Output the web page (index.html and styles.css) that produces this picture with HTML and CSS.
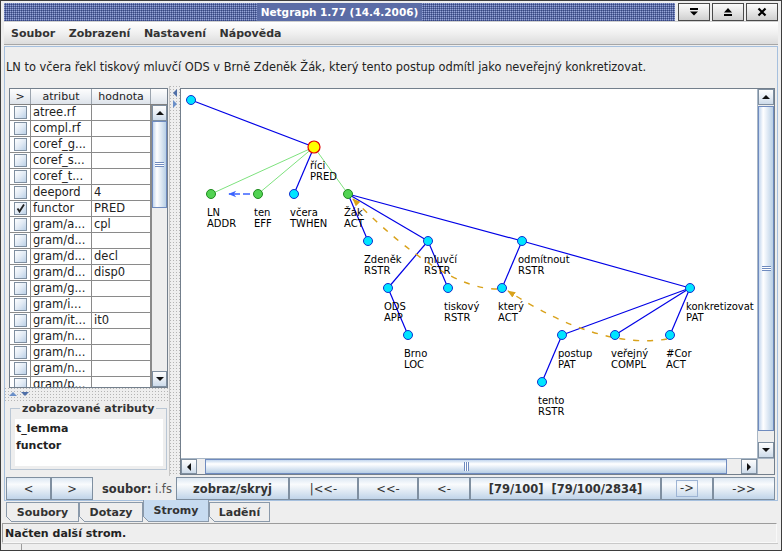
FILE: index.html
```html
<!DOCTYPE html>
<html lang="cs">
<head>
<meta charset="utf-8">
<title>Netgraph 1.77</title>
<link rel="stylesheet" href="styles.css">
</head>
<body>
<div class="window">
  <div class="titlebar">
    <div class="bumps"></div>
    <div class="title">Netgraph 1.77 (14.4.2006)</div>
    <div class="bumps"></div>
    <div class="wbtns">
      <div class="wbtn"><svg width="12" height="10" viewBox="0 0 12 10"><rect x="2" y="1" width="8" height="2"/><path d="M2 4.5h8l-4 4z"/></svg></div>
      <div class="wbtn"><svg width="12" height="10" viewBox="0 0 12 10"><path d="M2 5.5h8l-4-4.5z"/><rect x="2" y="7" width="8" height="2"/></svg></div>
      <div class="wbtn"><svg width="12" height="10" viewBox="0 0 12 10"><path d="M2.5 1.5l7 7M9.5 1.5l-7 7" stroke="#000" stroke-width="2.2" fill="none"/></svg></div>
    </div>
  </div>
  <div class="menubar">
    <span class="menu">Soubor</span>
    <span class="menu">Zobrazení</span>
    <span class="menu">Nastavení</span>
    <span class="menu">Nápověda</span>
  </div>
  <div class="main">
    <div class="sentence">LN to včera řekl tiskový mluvčí ODS v Brně Zdeněk Žák, který tento postup odmítl jako neveřejný konkretizovat.</div>
    <div class="split">
      <div class="leftpane">
        <div class="attr-table">
          <div class="thead">
            <div class="th c-sel">&gt;</div>
            <div class="th c-name">atribut</div>
            <div class="th c-val">hodnota</div>
            <div class="th c-corner"></div>
          </div>
          <div class="tbody">
            <div class="rows">
              <div class="row"><div class="cell c-sel"><span class="chk"></span></div><div class="cell c-name">atree.rf</div><div class="cell c-val"></div></div>
              <div class="row"><div class="cell c-sel"><span class="chk"></span></div><div class="cell c-name">compl.rf</div><div class="cell c-val"></div></div>
              <div class="row"><div class="cell c-sel"><span class="chk"></span></div><div class="cell c-name">coref_g...</div><div class="cell c-val"></div></div>
              <div class="row"><div class="cell c-sel"><span class="chk"></span></div><div class="cell c-name">coref_s...</div><div class="cell c-val"></div></div>
              <div class="row"><div class="cell c-sel"><span class="chk"></span></div><div class="cell c-name">coref_t...</div><div class="cell c-val"></div></div>
              <div class="row"><div class="cell c-sel"><span class="chk"></span></div><div class="cell c-name">deepord</div><div class="cell c-val">4</div></div>
              <div class="row"><div class="cell c-sel"><span class="chk"><svg width="11" height="11" viewBox="0 0 11 11"><path d="M2.5 5.5l2 3 4.5-7" fill="none" stroke="#222" stroke-width="1.8"/></svg></span></div><div class="cell c-name">functor</div><div class="cell c-val">PRED</div></div>
              <div class="row"><div class="cell c-sel"><span class="chk"></span></div><div class="cell c-name">gram/a...</div><div class="cell c-val">cpl</div></div>
              <div class="row"><div class="cell c-sel"><span class="chk"></span></div><div class="cell c-name">gram/d...</div><div class="cell c-val"></div></div>
              <div class="row"><div class="cell c-sel"><span class="chk"></span></div><div class="cell c-name">gram/d...</div><div class="cell c-val">decl</div></div>
              <div class="row"><div class="cell c-sel"><span class="chk"></span></div><div class="cell c-name">gram/d...</div><div class="cell c-val">disp0</div></div>
              <div class="row"><div class="cell c-sel"><span class="chk"></span></div><div class="cell c-name">gram/g...</div><div class="cell c-val"></div></div>
              <div class="row"><div class="cell c-sel"><span class="chk"></span></div><div class="cell c-name">gram/i...</div><div class="cell c-val"></div></div>
              <div class="row"><div class="cell c-sel"><span class="chk"></span></div><div class="cell c-name">gram/it...</div><div class="cell c-val">it0</div></div>
              <div class="row"><div class="cell c-sel"><span class="chk"></span></div><div class="cell c-name">gram/n...</div><div class="cell c-val"></div></div>
              <div class="row"><div class="cell c-sel"><span class="chk"></span></div><div class="cell c-name">gram/n...</div><div class="cell c-val"></div></div>
              <div class="row"><div class="cell c-sel"><span class="chk"></span></div><div class="cell c-name">gram/n...</div><div class="cell c-val"></div></div>
              <div class="row"><div class="cell c-sel"><span class="chk"></span></div><div class="cell c-name">gram/p...</div><div class="cell c-val"></div></div>
            </div>
            <div class="vscroll small">
              <div class="sbtn"><span class="tri-u"></span></div>
              <div class="track"><div class="thumb tthumb"><span class="grip-v"></span></div></div>
              <div class="sbtn"><span class="tri-d"></span></div>
            </div>
          </div>
        </div>
        <div class="hsplit"><span class="mini-u"></span><span class="mini-d"></span></div>
        <fieldset class="shown">
          <legend>zobrazované atributy</legend>
          <div class="shown-list">
            <div class="shown-item">t_lemma</div>
            <div class="shown-item">functor</div>
          </div>
        </fieldset>
      </div>
      <div class="vsplit"><span class="mini-l"></span><span class="mini-r"></span></div>
      <div class="treepane">
        <div class="viewport">
          <svg class="tree" width="576" height="369" viewBox="181 89 576 369">
            <defs>
              <marker id="oa" viewBox="0 0 10 10" refX="9" refY="5" markerWidth="8" markerHeight="8" orient="auto" markerUnits="userSpaceOnUse">
                <path d="M0 1L10 5L0 9z" fill="#d9a21b"/>
              </marker>
              <marker id="ba" viewBox="0 0 10 10" refX="9" refY="5" markerWidth="9" markerHeight="8" orient="auto" markerUnits="userSpaceOnUse">
                <path d="M0 1L10 5L0 9L3 5z" fill="#3b63ff"/>
              </marker>
            </defs>
            <g fill="none" stroke="#7ee27e" stroke-width="1">
              <line x1="314" y1="147" x2="211" y2="194"/>
              <line x1="314" y1="147" x2="258" y2="194"/>
              <line x1="314" y1="147" x2="348" y2="194"/>
            </g>
            <g fill="none" stroke="#0000e6" stroke-width="1.2">
              <line x1="191" y1="100" x2="314" y2="147"/>
              <line x1="314" y1="147" x2="294" y2="194"/>
              <line x1="348" y1="194" x2="368" y2="241"/>
              <line x1="348" y1="194" x2="428" y2="241"/>
              <line x1="348" y1="194" x2="522" y2="241"/>
              <line x1="522" y1="241" x2="690" y2="288"/>
              <line x1="428" y1="241" x2="388" y2="288"/>
              <line x1="428" y1="241" x2="448" y2="288"/>
              <line x1="388" y1="288" x2="408" y2="335"/>
              <line x1="522" y1="241" x2="502" y2="288"/>
              <line x1="690" y1="288" x2="562" y2="335"/>
              <line x1="690" y1="288" x2="615" y2="335"/>
              <line x1="690" y1="288" x2="670" y2="335"/>
              <line x1="562" y1="335" x2="542" y2="382"/>
            </g>
            <g fill="none" stroke="#d9a21b" stroke-width="1.4" stroke-dasharray="6 8">
              <path d="M667 339 Q600 350 508 291" marker-end="url(#oa)"/>
              <path d="M497 289 Q443 289 353 199" marker-end="url(#oa)"/>
            </g>
            <line x1="250" y1="194" x2="229" y2="194" stroke="#3b63ff" stroke-width="1.6" stroke-dasharray="7 3" marker-end="url(#ba)"/>
            <g class="n-cyan">
              <circle cx="191" cy="100" r="4.5"/>
              <circle cx="294" cy="194" r="4.5"/>
              <circle cx="368" cy="241" r="4.5"/>
              <circle cx="428" cy="241" r="4.5"/>
              <circle cx="522" cy="241" r="4.5"/>
              <circle cx="388" cy="288" r="4.5"/>
              <circle cx="448" cy="288" r="4.5"/>
              <circle cx="502" cy="288" r="4.5"/>
              <circle cx="690" cy="288" r="4.5"/>
              <circle cx="408" cy="335" r="4.5"/>
              <circle cx="562" cy="335" r="4.5"/>
              <circle cx="615" cy="335" r="4.5"/>
              <circle cx="670" cy="335" r="4.5"/>
              <circle cx="542" cy="382" r="4.5"/>
            </g>
            <g class="n-green">
              <circle cx="211" cy="194" r="4.5"/>
              <circle cx="258" cy="194" r="4.5"/>
              <circle cx="348" cy="194" r="4.5"/>
            </g>
            <circle class="n-yellow" cx="314" cy="147" r="6"/>
            <g class="lbl">
              <text x="310" y="169">říci<tspan x="310" y="180">PRED</tspan></text>
              <text x="207" y="216">LN<tspan x="207" y="227">ADDR</tspan></text>
              <text x="254" y="216">ten<tspan x="254" y="227">EFF</tspan></text>
              <text x="290" y="216">včera<tspan x="290" y="227">TWHEN</tspan></text>
              <text x="344" y="216">Žák<tspan x="344" y="227">ACT</tspan></text>
              <text x="364" y="263">Zdeněk<tspan x="364" y="274">RSTR</tspan></text>
              <text x="424" y="263">mluvčí<tspan x="424" y="274">RSTR</tspan></text>
              <text x="518" y="263">odmítnout<tspan x="518" y="274">RSTR</tspan></text>
              <text x="384" y="310">ODS<tspan x="384" y="321">APP</tspan></text>
              <text x="444" y="310">tiskový<tspan x="444" y="321">RSTR</tspan></text>
              <text x="498" y="310">který<tspan x="498" y="321">ACT</tspan></text>
              <text x="686" y="310">konkretizovat<tspan x="686" y="321">PAT</tspan></text>
              <text x="404" y="357">Brno<tspan x="404" y="368">LOC</tspan></text>
              <text x="558" y="357">postup<tspan x="558" y="368">PAT</tspan></text>
              <text x="611" y="357">veřejný<tspan x="611" y="368">COMPL</tspan></text>
              <text x="666" y="357">#Cor<tspan x="666" y="368">ACT</tspan></text>
              <text x="538" y="404">tento<tspan x="538" y="415">RSTR</tspan></text>
            </g>
          </svg>
        </div>
        <div class="vscroll">
          <div class="sbtn"><span class="tri-u"></span></div>
          <div class="track"><div class="thumb vthumb"><span class="grip-v"></span></div></div>
          <div class="sbtn"><span class="tri-d"></span></div>
        </div>
        <div class="hscroll">
          <div class="sbtn"><span class="tri-l"></span></div>
          <div class="track"><div class="thumb hthumb"><span class="grip-h"></span></div></div>
          <div class="sbtn"><span class="tri-r"></span></div>
        </div>
        <div class="corner"></div>
      </div>
    </div>
    <div class="toolbar">
      <div class="btn w45">&lt;</div>
      <div class="btn w42">&gt;</div>
      <div class="file-label"><b>soubor:</b>&nbsp;<span class="fname">i.fs</span></div>
      <div class="btn bold w113">zobraz/skryj</div>
      <div class="btn w69">|&lt;&lt;-</div>
      <div class="btn w60">&lt;&lt;-</div>
      <div class="btn w52">&lt;-</div>
      <div class="btn bold w191">[79/100]&nbsp;&nbsp;[79/100/2834]</div>
      <div class="btn w52"><span class="focus">-&gt;</span></div>
      <div class="btn w62">-&gt;&gt;</div>
    </div>
  </div>
  <div class="tabs">
    <div class="tab t73">Soubory</div>
    <div class="tab t64">Dotazy</div>
    <div class="tab t66 sel">Stromy</div>
    <div class="tab t61">Ladění</div>
  </div>
  <div class="status">Načten další strom.</div>
  <div class="strip"><span class="strip-cell"></span></div>
</div>
</body>
</html>
```

FILE: styles.css
```css
* { box-sizing: border-box; }
html, body { margin: 0; padding: 0; }
body {
  width: 782px; height: 551px; overflow: hidden;
  background: #eeeeee;
  font-family: "DejaVu Sans", "Liberation Sans", sans-serif;
  font-size: 11px; color: #333333;
}
.window {
  width: 782px; height: 551px;
  border: 1px solid #3d3d3d;
  padding: 2px 3px 0 3px;
  display: flex; flex-direction: column;
  background: #eeeeee;
}

/* title bar */
.titlebar { height: 18px; flex: none; display: flex; align-items: stretch; }
.bumps {
  flex: 1;
  background-color: #5b6ca6;
  background-image:
    conic-gradient(at 1px 1px, transparent 0 75%, #97a5d6 0),
    conic-gradient(at 1px 1px, transparent 0 75%, #38477f 0);
  background-size: 2px 2px, 2px 2px;
  background-position: 0 0, 1px 1px;
}
.title {
  background: #5b6ca6; color: #ffffff;
  font-weight: bold; font-size: 10.5px; line-height: 18px;
  padding: 0 4px; white-space: nowrap;
}
.wbtns { display: flex; gap: 2px; margin-left: 3px; }
.wbtn {
  width: 32px; height: 18px;
  border: 1px solid #4a4a4a;
  background: linear-gradient(#fbfbfb, #e2e2e2 60%, #cfcfcf);
  display: flex; align-items: center; justify-content: center;
}
.wbtn svg { fill: #000; }

/* menu */
.menubar {
  height: 24px; flex: none;
  display: flex; align-items: center; gap: 13.5px;
  padding-left: 7px;
  background: linear-gradient(#ffffff, #f0f0f0 50%, #dcdcdc);
  border-top: 1px solid #cfcfcf;
  border-bottom: 1px solid #a6a6a6;
}
.menu { font-weight: bold; font-size: 11px; color: #333333; }

/* main tab content */
.main {
  margin-top: 1px; height: 455px; flex: none;
  border: 1px solid #a6c0de;
  display: flex; flex-direction: column;
}
.sentence {
  height: 39px; flex: none;
  display: flex; align-items: center;
  padding: 1px 0 0 1px; font-size: 11.4px; color: #222222; white-space: nowrap;
}
.split { height: 390px; flex: none; display: flex; }

/* left pane */
.leftpane {
  width: 165px; flex: none;
  padding: 2px 1px 0 4px;
  display: flex; flex-direction: column;
  border-right: 1px solid #c6c6c6;
}
.attr-table {
  height: 300px; flex: none;
  border: 1px solid #737f8c;
  display: flex; flex-direction: column;
  background: #ffffff;
}
.thead { height: 16px; flex: none; display: flex; border-bottom: 1px solid #808080; }
.th {
  background: linear-gradient(#fdfdfd, #eef1f5 50%, #dde3ea);
  border-right: 1px solid #9ba4ae;
  text-align: center; line-height: 15px; font-size: 11px; color: #222;
}
.th.c-corner { flex: 1; border-right: 0; }
.c-sel { width: 21px; flex: none; }
.c-name { width: 61px; flex: none; }
.c-val { width: 59px; flex: none; }
.tbody { flex: 1; display: flex; overflow: hidden; }
.rows { width: 141px; flex: none; overflow: hidden; }
.row { height: 16px; display: flex; border-bottom: 1px solid #8a8a8a; }
.cell {
  border-right: 1px solid #8a8a8a;
  line-height: 15px; font-size: 11.5px; color: #222;
  white-space: nowrap; overflow: hidden; padding-left: 2px;
}
.cell.c-sel { padding: 1px 0 0 4px; }
.chk {
  display: flex; align-items: center; justify-content: center;
  width: 13px; height: 13px;
  border: 1px solid #7f8fa0;
  background: linear-gradient(135deg, #ffffff, #e2ebf5 50%, #bcd1e7);
}

/* scrollbars */
.vscroll { display: flex; flex-direction: column; background: #eeeeee; border-left: 1px solid #a9b7c6; }
.vscroll.small { width: 16px; flex: none; border-left: 1px solid #8a8a8a; }
.hscroll { display: flex; background: #eeeeee; border-top: 1px solid #a9b7c6; }
.sbtn {
  flex: none; width: 16px; height: 16px;
  border: 1px solid #7f8fa0;
  background: linear-gradient(#fdfdfd, #e8eef5 50%, #cddbea);
  display: flex; align-items: center; justify-content: center;
}
.vscroll .sbtn { width: 100%; }
.hscroll .sbtn { height: 100%; }
.vscroll .track { flex: 1; display: flex; flex-direction: column; }
.hscroll .track { flex: 1; display: flex; }
.thumb {
  border: 1px solid #6f8bbf;
  display: flex; align-items: center; justify-content: center;
}
.vthumb, .tthumb { background: linear-gradient(to right, #c3d6ee, #ffffff 30%, #e6eef7 55%, #b8cfe5); }
.tthumb { height: 87px; }
.vthumb { height: 325px; margin-top: 1px; }
.hthumb { width: 522px; margin-left: 8px; background: linear-gradient(#c3d6ee, #ffffff 30%, #e6eef7 55%, #b8cfe5); }
.grip-v { width: 9px; height: 5px; background: repeating-linear-gradient(#6f8bbf 0 1px, #ffffff 1px 2px); }
.grip-h { width: 5px; height: 9px; background: repeating-linear-gradient(90deg, #6f8bbf 0 1px, #ffffff 1px 2px); }
.tri-u { width: 0; height: 0; border-left: 4px solid transparent; border-right: 4px solid transparent; border-bottom: 4px solid #111; }
.tri-d { width: 0; height: 0; border-left: 4px solid transparent; border-right: 4px solid transparent; border-top: 4px solid #111; }
.tri-l { width: 0; height: 0; border-top: 4px solid transparent; border-bottom: 4px solid transparent; border-right: 4px solid #111; }
.tri-r { width: 0; height: 0; border-top: 4px solid transparent; border-bottom: 4px solid transparent; border-left: 4px solid #111; }
.corner { background: #eeeeee; border-top: 1px solid #a9b7c6; border-left: 1px solid #a9b7c6; }

/* splitters */
.hsplit, .vsplit {
  background-color: #eeeeee;
  background-image: conic-gradient(at 1px 1px, transparent 0 75%, #b4b4b4 0);
  background-size: 3px 3px;
}
.hsplit { height: 14px; flex: none; display: flex; gap: 4px; padding: 4px 0 0 4px; margin-left: -4px; margin-right: -1px; }
.mini-u { width: 0; height: 0; border-left: 4px solid transparent; border-right: 4px solid transparent; border-bottom: 4px solid #6a8fc8; }
.mini-d { width: 0; height: 0; border-left: 4px solid transparent; border-right: 4px solid transparent; border-top: 4px solid #4f6fa8; }
.vsplit { width: 10px; flex: none; display: flex; flex-direction: column; align-items: center; gap: 3px; padding-top: 3px; }
.mini-l { width: 0; height: 0; border-top: 4px solid transparent; border-bottom: 4px solid transparent; border-right: 4px solid #4f6fa8; }
.mini-r { width: 0; height: 0; border-top: 4px solid transparent; border-bottom: 4px solid transparent; border-left: 4px solid #6a8fc8; }

/* shown attributes */
.shown {
  margin: 0 0 0 1px; width: 157px; min-width: 0;
  padding: 4px 4px 3px 4px;
  border: 1px solid #b9c6d4;
}
.shown legend { font-weight: bold; font-size: 11px; line-height: 13px; padding: 0 2px; margin-left: 5px; color: #333; }
.shown-list { background: #ffffff; height: 47px; width: 148px; padding: 1px 1px; }
.shown-item { font-weight: bold; font-size: 11px; line-height: 17px; color: #222; }

/* tree */
.treepane {
  flex: 1; margin: 2px 2px 1px 0;
  border: 1px solid #737f8c;
  display: grid; grid-template-columns: 1fr 17px; grid-template-rows: 1fr 16px;
}
.viewport { background: #ffffff; overflow: hidden; }
.tree { display: block; }
.n-cyan circle { fill: #00e5ff; stroke: #1030d0; stroke-width: 1; }
.n-green circle { fill: #52d352; stroke: #208a20; stroke-width: 1; }
.n-yellow { fill: #ffff00; stroke: #e00000; stroke-width: 1.2; }
.lbl text { font-family: "DejaVu Sans", sans-serif; font-size: 10px; fill: #000000; }

/* toolbar */
.toolbar { height: 24px; flex: none; display: flex; padding: 1px 0 0 1px; }
.btn {
  height: 23px; flex: none;
  border: 1px solid #7f8fa0;
  background: linear-gradient(#dde8f3, #f9fbfd 30%, #eef3f8 45%, #c0d4e9);
  display: flex; align-items: center; justify-content: center;
  font-size: 11.5px; color: #333333; white-space: nowrap;
}
.btn.bold { font-weight: bold; }
.w45 { width: 45px; } .w42 { width: 42px; } .w113 { width: 113px; } .w69 { width: 69px; }
.w60 { width: 60px; } .w52 { width: 52px; } .w191 { width: 191px; } .w62 { width: 62px; }
.file-label { width: 83px; flex: none; display: flex; align-items: center; padding-left: 9px; font-size: 11.5px; color: #333; white-space: nowrap; overflow: hidden; }
.fname { color: #555; }
.focus { border: 1px solid #9db4d4; padding: 1px 3px; line-height: 13px; }

/* tabs */
.tabs { height: 22px; flex: none; display: flex; padding-left: 2px; }
.tab {
  position: relative;
  height: 20px; margin-top: 1px;
  border: 1px solid #8a99aa;
  display: flex; align-items: center; justify-content: center;
  font-weight: bold; font-size: 11px; color: #333;
  background: #eeeeee;
}
.tab::before {
  content: ""; position: absolute; left: -1px; bottom: -1px; width: 6px; height: 6px;
  background: linear-gradient(to top right, #eeeeee 0 45%, #8a99aa 45% 58%, transparent 58%);
}
.tab.sel { margin-top: -1px; height: 22px; border-top: 0; background: #c7dbf0; }
.t73 { width: 73px; } .t64 { width: 64px; } .t66 { width: 66px; } .t61 { width: 61px; }

/* status */
.status {
  height: 20px; flex: none; margin-left: -2px; margin-right: 1px;
  border: 1px solid; border-color: #9c9c9c #f8f8f8 #f8f8f8 #9c9c9c;
  display: flex; align-items: center; padding-left: 2px;
  font-weight: bold; font-size: 11px; color: #222;
}
.strip { flex: 1; display: flex; margin-left: -2px; border-top: 1px solid #c8c8c8; }
.strip-cell { width: 20px; border-right: 1px solid #9c9c9c; }
```
